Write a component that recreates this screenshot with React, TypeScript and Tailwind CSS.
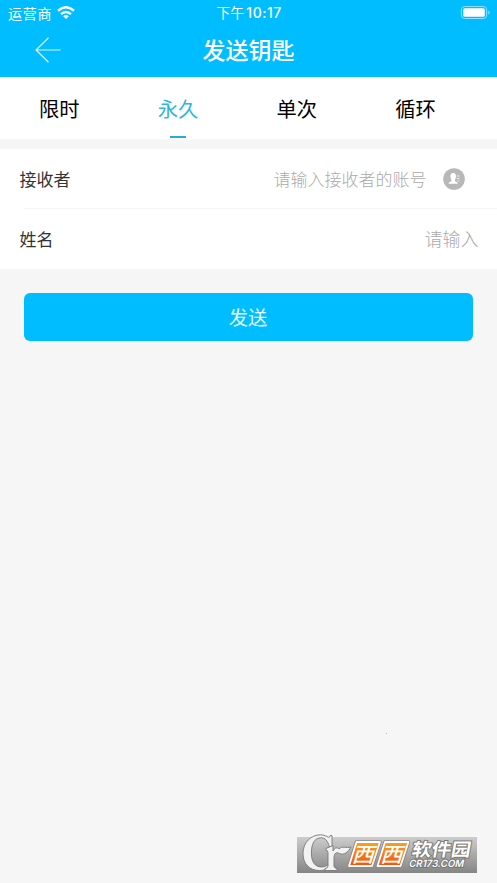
import React from "react";

const tabs = ["限时", "永久", "单次", "循环"];

function StatusBar() {
  return (
    <div className="grid h-[26px] grid-cols-3 items-center pb-px pl-[8px] pr-[7px] text-[14px] leading-none">
      <div className="flex items-center gap-[5px]">
        <span className="tracking-[0.7px]">运营商</span>
        <svg width="18" height="14" viewBox="0 0 18 14" fill="none" stroke="#fff" strokeWidth="2.5">
          <path d="M1 4.7Q9-2.2 17 4.7" />
          <path d="M4 8.1Q9 3.8 14 8.1" />
          <path d="M9 13L6.2 10.2Q9 8 11.8 10.2Z" fill="#fff" stroke="none" />
        </svg>
      </div>
      <div className="whitespace-nowrap text-center">
        下午 <span className="-ml-px font-['Inter'] text-[14px] font-medium tracking-[0.5px]">10:17</span>
      </div>
      <div className="flex justify-end">
        <svg width="30" height="14" viewBox="0 0 30 14">
          <rect x="1.3" y="0.5" width="25.4" height="12" rx="3.4" fill="none" stroke="#8fe0ff" />
          <rect x="3.2" y="2.2" width="21.6" height="8.6" rx="1.6" fill="#fff" />
          <path d="M28.3 4.5v4q1.4-.7 1.4-2t-1.4-2Z" fill="#8fe0ff" />
        </svg>
      </div>
    </div>
  );
}

function Watermark() {
  return (
    <svg className="absolute left-[296px] top-[830px]" width="184" height="46" viewBox="0 0 184 46">
      <defs>
        <linearGradient id="plate" x1="0" y1="0" x2="0" y2="1">
          <stop offset="0" stopColor="#cdcdcd" />
          <stop offset="1" stopColor="#858585" />
        </linearGradient>
        <linearGradient id="orange" x1="0" y1="0" x2="0" y2="1">
          <stop offset="0" stopColor="#ffa21c" />
          <stop offset="1" stopColor="#ef5410" />
        </linearGradient>
      </defs>
      <rect x="1" y="7" width="180" height="36" fill="url(#plate)" />
      <g fill="#f2f2f2" stroke="#777" strokeWidth="0.9">
        <path d="M36 5.5V17H33.5C31.5 10.5 29 7.8 25.3 7.8C18.3 7.8 15.4 14 15.4 23C15.4 32 19 37 25.5 37C30 37 33 34.5 35.2 31.5L37 33.5C34 38 30 40.5 23.5 40.5C13.5 40.5 7 34 7 23.3C7 12.5 15 4.8 24.5 4.8C28 4.8 30.5 6.3 32.5 7.3Q34 7.5 34.2 5.5Z" />
        <path d="M30 18.5L37 15.5V21C38.5 17.5 41.5 17 43 19C46 15.5 50 18.5 55 17C52 22.5 48 25.5 43.5 23.5C39.5 21.5 38 24 38 28V36Q38 38 41 38.5V40.5H29V38.5Q32 38.2 32 36V22.5Q32 20.5 30 20.3Z" />
      </g>
      <g strokeLinejoin="round">
        <path d="M60.5 12H84L76 36H53Z M89 12H112.5L104.5 36H81.5Z" fill="url(#orange)" stroke="#888" strokeWidth="3.6" />
        <path d="M60.5 12H84L76 36H53Z M89 12H112.5L104.5 36H81.5Z" fill="url(#orange)" stroke="#fff" strokeWidth="1.8" />
      </g>
      <g fill="#fff" fontFamily="'Noto Sans CJK SC', sans-serif">
        <g fontSize="20.5" fontWeight="500">
          <text transform="translate(55.5 31.8) skewX(-17) scale(1.08 1)">西</text>
          <text transform="translate(84 31.8) skewX(-17) scale(1.08 1)">西</text>
        </g>
        <g stroke="#777" strokeWidth="1.8" paintOrder="stroke">
          <text transform="translate(115 26) skewX(-10)" fontSize="18" fontWeight="700" textLength="59" lengthAdjust="spacingAndGlyphs">软件园</text>
          <text transform="translate(112.5 36.5) skewX(-12)" fontFamily="Inter, sans-serif" fontWeight="600" fontSize="10" textLength="55" lengthAdjust="spacingAndGlyphs">CR173.COM</text>
        </g>
      </g>
    </svg>
  );
}

export default function App() {
  return (
    <div className="relative h-[883px] w-[497px] overflow-hidden bg-[#f6f6f6] font-['Noto_Sans_CJK_SC',sans-serif]">
      <header className="h-[77px] bg-[#00bdff] text-white">
        <StatusBar />
        <div className="grid h-[48px] grid-cols-3 items-center">
          <svg className="ml-[35px]" width="26" height="26" viewBox="0 0 26 26" fill="none" stroke="#d8f7ff" strokeWidth="1.2">
            <path d="M13.5 .8L1 13L13.5 25.2M1 13H25.5" />
          </svg>
          <h1 className="pb-[2px] text-center text-[23px] font-medium leading-none">发送钥匙</h1>
        </div>
      </header>
      <nav className="flex h-[62px] bg-white pr-[22px] text-[20.3px]">
        {tabs.map((tab, i) => (
          <div key={tab} className={`flex flex-1 flex-col items-center ${i === 1 ? "text-[#2eb5e5]" : "text-black"}`}>
            <span className="mt-[15px] h-[44px] leading-[32px]">{tab}</span>
            {i === 1 && <span className="h-[2px] w-4 bg-[#2ba9dc]" />}
          </div>
        ))}
      </nav>
      <section className="mt-[10px] h-[120px] bg-white text-[17px] text-[#333]">
        <div className="flex h-[59px] items-center pl-[19.5px] pr-[32.5px]">
          <span>接收者</span>
          <span className="ml-auto font-light text-[#aaa]">请输入接收者的账号</span>
          <svg className="ml-[16px]" width="22" height="22" viewBox="0 0 22 22">
            <circle cx="11" cy="11" r="10.8" fill="#b8b8b8" />
            <path d="M5.5 15.8Q5.5 14 8.6 13Q8.6 12 7.6 10Q6.8 5 10.2 5Q13.6 5 12.8 10Q11.8 12 11.8 13Q14.8 14 14.8 15.8Z" fill="#fff" />
            <path d="M13.8 8H16.5M13.8 10.5H16.5M14.4 13H16.5" stroke="#eee" strokeWidth="1" />
          </svg>
        </div>
        <div className="ml-6 h-px bg-[#f5f5f5]" />
        <div className="flex h-[59px] items-center pl-[19.5px] pr-[18.5px]">
          <span>姓名</span>
          <span className="ml-auto text-[18px] font-light text-[#aaa]">请输入</span>
        </div>
      </section>
      <button className="ml-6 mt-6 flex h-12 w-[449px] items-center justify-center rounded-md bg-[#00bdff] pr-px text-[19.3px] text-[#e8faff]">
        发送
      </button>
      <span className="absolute left-[386px] top-[733px] size-px bg-[#b5b5b5]" />
      <Watermark />
    </div>
  );
}
